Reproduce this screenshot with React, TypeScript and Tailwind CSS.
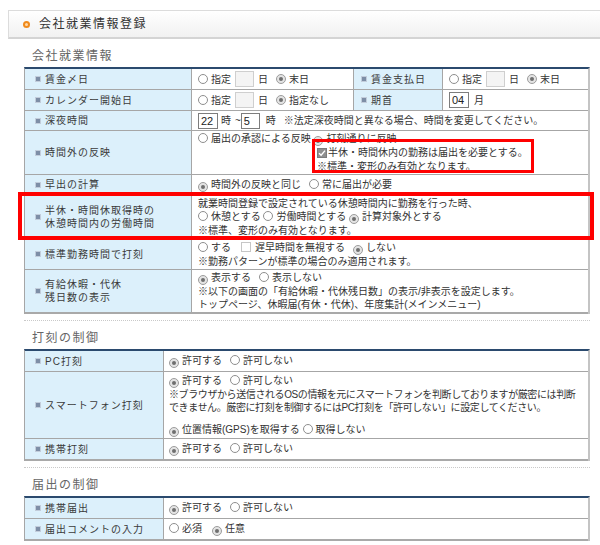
import type { ReactNode } from "react";

const font = "font-['Liberation_Sans','Noto_Sans_CJK_JP',sans-serif]";

function Radio({ on }: { on?: boolean }) {
  if (on) {
    return (
      <span className="inline-flex w-[10px] h-[10px] rounded-full border border-[#9c9c9c] bg-[#e4e4e4] items-center justify-center align-[-1px] mr-[3px]">
        <span className="w-[4px] h-[4px] rounded-full bg-[#6f6f6f]" />
      </span>
    );
  }
  return (
    <span className="inline-block w-[10px] h-[10px] rounded-full border border-[#8e8e8e] bg-white align-[-1px] mr-[3px]" />
  );
}

function Check({ on }: { on?: boolean }) {
  if (on) {
    return (
      <span className="inline-flex w-[10px] h-[10px] border border-[#7c7c7c] bg-[#8f8f8f] items-center justify-center align-[-1px] mr-[1px]">
        <svg width="8" height="8" viewBox="0 0 8 8">
          <path d="M1 4.2 L3.1 6.2 L7 1.6" stroke="#fff" strokeWidth="1.4" fill="none" />
        </svg>
      </span>
    );
  }
  return <span className="inline-block w-[10px] h-[10px] border border-[#c6c6c6] bg-white align-[-1px] mr-[4px]" />;
}

function Box({ v, wide }: { v?: string; wide?: boolean }) {
  if (v === undefined) {
    return <span className="inline-block w-[19px] h-[16px] border border-[#cfcfcf] bg-[#f4f4f4] align-middle mx-[4px]" />;
  }
  return (
    <span
      className={
        wide
          ? "inline-block w-[20px] h-[16px] border border-[#7d7d7d] bg-white align-middle px-[2px] leading-[14px] text-[11px] text-[#222]"
          : "inline-block w-[19px] h-[16px] border border-[#7d7d7d] bg-white align-middle px-[2px] leading-[14px] text-[11px] text-[#222]"
      }
    >
      {v}
    </span>
  );
}

function Label({ lines, w }: { lines: string[]; w: "lg" | "sm" | "mid" }) {
  const cls =
    w === "lg"
      ? "w-[167px] shrink-0 bg-[#dcf0fb] border-r border-[#a6a6a6] flex items-center pl-[11px]"
      : w === "mid"
      ? "w-[90px] shrink-0 bg-[#dcf0fb] border-x border-[#a6a6a6] flex items-center pl-[8px]"
      : "w-[139px] shrink-0 bg-[#dcf0fb] border-r border-[#a6a6a6] flex items-center pl-[11px]";
  return (
    <div className={cls}>
      <span className="w-[4px] h-[4px] bg-[#7e8ea6] shadow-[0_0_0_1px_#c2cddb] shrink-0" />
      <div className="pl-[5px] text-[10px] leading-[13px] tracking-[1px] text-[#3a3a3a]">
        {lines.map((l) => (
          <div key={l}>{l}</div>
        ))}
      </div>
    </div>
  );
}

function Row({ h, children, last }: { h: string; children: ReactNode; last?: boolean }) {
  return (
    <div className={last ? `flex ${h} border-b-2 border-[#a9a9a9]` : `flex ${h} border-b border-[#a6a6a6]`}>
      {children}
    </div>
  );
}

function Val({ children, pad }: { children: ReactNode; pad?: boolean }) {
  return (
    <div
      className={
        pad
          ? "flex-1 flex flex-col justify-center pl-[6px] text-[10px] leading-[13px] text-[#333] whitespace-nowrap overflow-hidden"
          : "flex-1 flex flex-col justify-center pl-[5px] text-[10px] leading-[13px] text-[#333] whitespace-nowrap overflow-hidden"
      }
    >
      {children}
    </div>
  );
}

function Heading({ children }: { children: ReactNode }) {
  return (
    <div className="pt-[10px] pl-[8px] mb-[4px] text-[12px] leading-[14px] tracking-[1.5px] text-[#666]">
      {children}
    </div>
  );
}

function Table({ children }: { children: ReactNode }) {
  return (
    <div className="border-t-2 border-t-[#2b4a6e] border-l border-l-[#a6a6a6] border-r-2 border-r-[#c4c4c4]">
      {children}
    </div>
  );
}

function Dots() {
  return <div className="mt-[6px] border-b border-dotted border-[#c9c9c9]" />;
}

export default function App() {
  return (
    <div className={`relative w-[600px] h-[545px] overflow-hidden bg-white ${font}`}>
      {/* タイトルバー */}
      <div className="mt-[10px] ml-[8px] h-[29px] border-t border-l border-[#dcdcdc] border-b-2 border-b-[#d4d4d4] bg-gradient-to-b from-white to-[#f1f1f1] flex items-center pl-[14px]">
        <span className="w-[7px] h-[7px] rounded-full bg-[#f08a1c] flex items-center justify-center">
          <span className="w-[3px] h-[3px] rounded-full bg-[#ffd9a8]" />
        </span>
        <span className="ml-[9px] text-[12px] tracking-[1.5px] text-[#333]">会社就業情報登録</span>
      </div>

      <div className="ml-[24px] w-[566px]">
        <Heading>会社就業情報</Heading>
        <Table>
          <Row h="h-[21px]">
            <Label w="lg" lines={["賃金〆日"]} />
            <div className="w-[161px] shrink-0 flex items-center pl-[6px] text-[10px] text-[#333]">
              <Radio />指定<Box />日<span className="w-[8px]" /><Radio on />末日
            </div>
            <Label w="mid" lines={["賃金支払日"]} />
            <Val pad>
              <div className="flex items-center">
                <Radio />指定<Box />日<span className="w-[8px]" /><Radio on />末日
              </div>
            </Val>
          </Row>
          <Row h="h-[21px]">
            <Label w="lg" lines={["カレンダー開始日"]} />
            <div className="w-[161px] shrink-0 flex items-center pl-[6px] text-[10px] text-[#333]">
              <Radio />指定<Box />日<span className="w-[8px]" /><Radio on />指定なし
            </div>
            <Label w="mid" lines={["期首"]} />
            <Val pad>
              <div className="flex items-center">
                <Box v="04" wide />
                <span className="ml-[5px]">月</span>
              </div>
            </Val>
          </Row>
          <Row h="h-[20px]">
            <Label w="lg" lines={["深夜時間"]} />
            <Val pad>
              <div className="flex items-center">
                <Box v="22" wide />
                <span className="ml-[3px]">時</span>
                <span className="ml-[4px]">~</span>
                <Box v="5" />
                <span className="ml-[6px]">時</span>
                <span className="ml-[8px]">※法定深夜時間と異なる場合、時間を変更してください。</span>
              </div>
            </Val>
          </Row>
          <Row h="h-[44px]">
            <Label w="lg" lines={["時間外の反映"]} />
            <Val pad>
              <div>
                <Radio />届出の承認による反映 <Radio on />打刻通りに反映
              </div>
              <div className="pl-[119px] leading-[13.5px]">
                <Check on />半休・時間休内の勤務は届出を必要とする。
              </div>
              <div className="pl-[119px] leading-[13.5px]">※標準・変形のみ有効となります。</div>
            </Val>
          </Row>
          <Row h="h-[20px]">
            <Label w="lg" lines={["早出の計算"]} />
            <Val pad>
              <div>
                <Radio on />時間外の反映と同じ<span className="inline-block w-[8px]" />
                <Radio />常に届出が必要
              </div>
            </Val>
          </Row>
          <Row h="h-[44px]">
            <Label w="lg" lines={["半休・時間休取得時の", "休憩時間内の労働時間"]} />
            <Val pad>
              <div>就業時間登録で設定されている休憩時間内に勤務を行った時、</div>
              <div>
                <Radio />休憩とする <Radio />労働時間とする <Radio on />計算対象外とする
              </div>
              <div>※標準、変形のみ有効となります。</div>
            </Val>
          </Row>
          <Row h="h-[31px]">
            <Label w="lg" lines={["標準勤務時間で打刻"]} />
            <Val pad>
              <div>
                <Radio />する<span className="inline-block w-[10px]" />
                <Check />遅早時間を無視する<span className="inline-block w-[8px]" />
                <Radio on />しない
              </div>
              <div>※勤務パターンが標準の場合のみ適用されます。</div>
            </Val>
          </Row>
          <Row h="h-[44px]" last>
            <Label w="lg" lines={["有給休暇・代休", "残日数の表示"]} />
            <Val pad>
              <div>
                <Radio on />表示する<span className="inline-block w-[8px]" />
                <Radio />表示しない
              </div>
              <div>※以下の画面の「有給休暇・代休残日数」の表示/非表示を設定します。</div>
              <div>トップページ、休暇届(有休・代休)、年度集計(メインメニュー)</div>
            </Val>
          </Row>
        </Table>
        <Dots />

        <Heading>打刻の制御</Heading>
        <Table>
          <Row h="h-[21px]">
            <Label w="sm" lines={["PC打刻"]} />
            <Val>
              <div>
                <Radio on />許可する<span className="inline-block w-[8px]" />
                <Radio />許可しない
              </div>
            </Val>
          </Row>
          <Row h="h-[67px]">
            <Label w="sm" lines={["スマートフォン打刻"]} />
            <Val>
              <div>
                <Radio on />許可する<span className="inline-block w-[8px]" />
                <Radio />許可しない
              </div>
              <div className="tracking-[-0.4px]">
                ※ブラウザから送信されるOSの情報を元にスマートフォンを判断しておりますが厳密には判断
              </div>
              <div className="tracking-[-0.4px]">
                できません。厳密に打刻を制御するにはPC打刻を「許可しない」に設定してください。
              </div>
              <div className="h-[9px]" />
              <div>
                <Radio on />位置情報(GPS)を取得する <Radio />取得しない
              </div>
            </Val>
          </Row>
          <Row h="h-[22px]" last>
            <Label w="sm" lines={["携帯打刻"]} />
            <Val>
              <div>
                <Radio on />許可する<span className="inline-block w-[8px]" />
                <Radio />許可しない
              </div>
            </Val>
          </Row>
        </Table>
        <Dots />

        <Heading>届出の制御</Heading>
        <Table>
          <Row h="h-[21px]">
            <Label w="sm" lines={["携帯届出"]} />
            <Val>
              <div>
                <Radio on />許可する<span className="inline-block w-[8px]" />
                <Radio />許可しない
              </div>
            </Val>
          </Row>
          <Row h="h-[22px]" last>
            <Label w="sm" lines={["届出コメントの入力"]} />
            <Val>
              <div>
                <Radio />必須<span className="inline-block w-[10px]" />
                <Radio on />任意
              </div>
            </Val>
          </Row>
        </Table>
        <Dots />
      </div>

      {/* 赤枠の注記 */}
      <div className="absolute left-[18px] top-[192px] w-[576px] h-[48px] border-4 border-[#ff0000] pointer-events-none" />
      <div className="absolute left-[312px] top-[139px] w-[222px] h-[34px] border-[3px] border-[#ff0000] pointer-events-none" />
    </div>
  );
}
